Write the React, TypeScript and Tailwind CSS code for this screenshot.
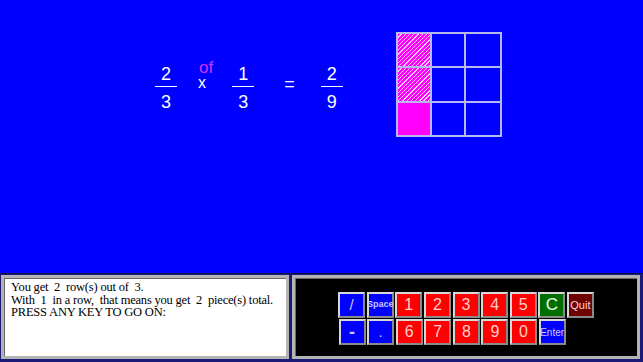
import React from 'react';

type Key = { label: string; bg: string; text: string; size: string };

const row1: Key[] = [
    { label: '/', bg: 'bg-[#0000ff]', text: 'text-[#c8c8ff]', size: 'text-[15px]' },
    { label: 'Space', bg: 'bg-[#0000ff]', text: 'text-[#c8c8ff]', size: 'text-[9px] font-bold' },
    { label: '1', bg: 'bg-[#ff0000]', text: 'text-[#ffd0d0]', size: 'text-[16px]' },
    { label: '2', bg: 'bg-[#ff0000]', text: 'text-[#ffd0d0]', size: 'text-[16px]' },
    { label: '3', bg: 'bg-[#ff0000]', text: 'text-[#ffd0d0]', size: 'text-[16px]' },
    { label: '4', bg: 'bg-[#ff0000]', text: 'text-[#ffd0d0]', size: 'text-[16px]' },
    { label: '5', bg: 'bg-[#ff0000]', text: 'text-[#ffd0d0]', size: 'text-[16px]' },
    { label: 'C', bg: 'bg-[#006e00]', text: 'text-[#e8ffe8]', size: 'text-[17px]' },
    { label: 'Quit', bg: 'bg-[#6e0000]', text: 'text-[#ffd8d8]', size: 'text-[11px]' },
];

const row2: Key[] = [
    { label: '-', bg: 'bg-[#0000ff]', text: 'text-[#c8c8ff]', size: 'text-[18px] font-bold' },
    { label: '.', bg: 'bg-[#0000ff]', text: 'text-[#c8c8ff]', size: 'text-[15px]' },
    { label: '6', bg: 'bg-[#ff0000]', text: 'text-[#ffd0d0]', size: 'text-[16px]' },
    { label: '7', bg: 'bg-[#ff0000]', text: 'text-[#ffd0d0]', size: 'text-[16px]' },
    { label: '8', bg: 'bg-[#ff0000]', text: 'text-[#ffd0d0]', size: 'text-[16px]' },
    { label: '9', bg: 'bg-[#ff0000]', text: 'text-[#ffd0d0]', size: 'text-[16px]' },
    { label: '0', bg: 'bg-[#ff0000]', text: 'text-[#ffd0d0]', size: 'text-[16px]' },
    { label: 'Enter', bg: 'bg-[#0000ff]', text: 'text-[#c8c8ff]', size: 'text-[10px]' },
];

const Fraction: React.FC<{ top: string; bottom: string }> = ({ top, bottom }) => (
    <div className="flex flex-col items-center w-[22px] text-[18px] leading-[18px] text-white">
        <span>{top}</span>
        <div className="w-full h-px bg-white mt-[3px] mb-[6px]" />
        <span>{bottom}</span>
    </div>
);

const KeyButton: React.FC<{ k: Key }> = ({ k }) => (
    <div
        className={`w-[27px] h-[26px] flex items-center justify-center border-2 border-t-[#d8d8d8] border-l-[#d8d8d8] border-r-[#8a8a8a] border-b-[#8a8a8a] ${k.bg} ${k.text} ${k.size}`}
    >
        {k.label}
    </div>
);

const App: React.FC = () => {
    const cells = [0, 1, 2, 3, 4, 5, 6, 7, 8];

    return (
        <div className="w-[643px] h-[362px] flex flex-col bg-[#1c1c78] overflow-hidden" style={{ fontFamily: '"Liberation Sans", Arial, sans-serif' }}>
            {/* Top: problem area */}
            <div className="h-[273px] bg-[#0000ff] flex items-start">
                <div className="flex items-start pt-[65px] pl-[155px]">
                    <Fraction top="2" bottom="3" />
                    <div className="flex flex-col items-start ml-[21px] -mt-[4px]">
                        <span className="text-[17px] leading-[14px] text-[#cc33ff] pl-[1px]">of</span>
                        <span className="text-[16px] leading-[12px] text-white mt-[2px]">x</span>
                    </div>
                    <div className="ml-[19px]">
                        <Fraction top="1" bottom="3" />
                    </div>
                    <span className="ml-[30px] mt-[10px] text-[18px] leading-[18px] text-white">=</span>
                    <div className="ml-[26px]">
                        <Fraction top="2" bottom="9" />
                    </div>
                </div>

                {/* 3x3 grid */}
                <div className="ml-[53px] mt-[32px] grid grid-cols-3 w-[106px] h-[105px] border-2 border-[#b8b8f0]">
                    {cells.map(i => {
                        const col = i % 3;
                        const row = Math.floor(i / 3);
                        let fill = 'bg-[#0000ff]';
                        if (col === 0 && row < 2) fill = 'bg-[repeating-linear-gradient(135deg,#ff00ff_0px,#ff00ff_2px,#ffd0ff_2px,#ffd0ff_3px)]';
                        if (col === 0 && row === 2) fill = 'bg-[#ff00ff]';
                        return (
                            <div
                                key={i}
                                className={`${fill} ${col < 2 ? 'border-r-2' : ''} ${row < 2 ? 'border-b-2' : ''} border-[#b8b8f0]`}
                            />
                        );
                    })}
                </div>
            </div>

            {/* Bottom strip */}
            <div className="flex gap-[3px] pt-px px-px border-t border-[#101050]">
                <div className="w-[288px] h-[84px] bg-white border-[3px] border-[#b4b4b4] shadow-[inset_1px_1px_0_#6a6a6a] pl-[7px] pt-[3px]">
                    <div
                        className="text-[12.5px] leading-[12.5px] tracking-[-0.2px] text-black whitespace-pre"
                        style={{ fontFamily: '"Liberation Serif", "Times New Roman", serif' }}
                    >
                        <div>You get  2  row(s) out of  3.</div>
                        <div>With  1  in a row,  that means you get  2  piece(s) total.</div>
                        <div>PRESS ANY KEY TO GO ON:</div>
                    </div>
                </div>
                <div className="w-[348px] h-[84px] bg-black border-[3px] border-[#b4b4b4] shadow-[inset_1px_1px_0_#6a6a6a] flex flex-col items-center justify-center gap-[1px] pt-[3px]">
                    <div className="flex gap-[1.6px]">
                        {row1.map(k => <KeyButton key={k.label} k={k} />)}
                    </div>
                    <div className="flex gap-[1.6px] w-[255px]">
                        {row2.map(k => <KeyButton key={k.label} k={k} />)}
                    </div>
                </div>
            </div>
        </div>
    );
};

export default App;
